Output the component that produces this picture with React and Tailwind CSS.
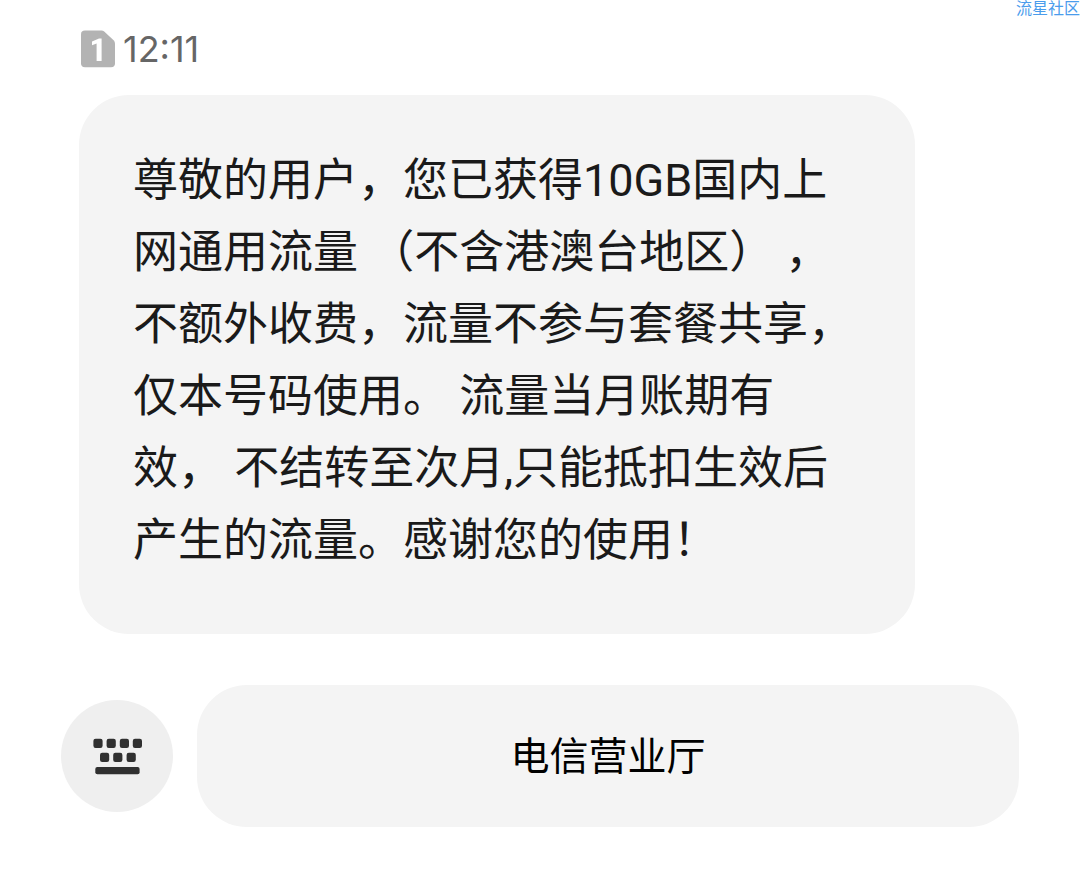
function SimIcon() {
  return (
    <svg width="34" height="38" viewBox="0 0 34 38" role="img" aria-label="SIM 1">
      <path
        d="M4 0.5H20.5Q22 0.5 23.2 1.5L32.6 10.2Q34 11.5 34 13.5V33.5Q34 37.2 30 37.2H4Q0 37.2 0 33.5V4.2Q0 0.5 4 0.5Z"
        fill="#b3b3b3"
      />
      <path d="M11 11.4L18 8.4H20.6V31H15.6V13.6L11 15.2Z" fill="#fff" />
    </svg>
  );
}

function KeyboardIcon() {
  return (
    <svg width="50" height="38" viewBox="0 0 50 38" fill="#303030" aria-hidden="true">
      <rect x="1.4" y="1.8" width="9.2" height="9.2" rx="2.2" />
      <rect x="14.6" y="1.8" width="9.2" height="9.2" rx="2.2" />
      <rect x="27.8" y="1.8" width="9.2" height="9.2" rx="2.2" />
      <rect x="40.8" y="1.8" width="9.2" height="9.2" rx="2.2" />
      <rect x="8" y="15.8" width="9.2" height="9.2" rx="2.2" />
      <rect x="21.2" y="15.8" width="9.2" height="9.2" rx="2.2" />
      <rect x="34.6" y="15.8" width="9.2" height="9.2" rx="2.2" />
      <rect x="3.3" y="30" width="44.3" height="7.2" rx="2" />
    </svg>
  );
}

export default function App() {
  return (
    <div className="relative min-h-screen bg-white px-[61px] pt-[30px] pb-[50px] font-['Roboto','Noto_Sans_CJK_SC',sans-serif]">
      <span className="absolute top-0 right-0 text-[16px] leading-[18px] whitespace-nowrap text-[#4a9cec]">
        流星社区
      </span>

      <main className="ml-[18px]">
        <div className="mb-[27px] ml-[2px] flex h-[38px] items-center gap-2">
          <SimIcon />
          <time className="font-['Inter','Noto_Sans_CJK_SC',sans-serif] text-[36px] leading-[38px] text-[#666]">
            12:11
          </time>
        </div>
        <p className="max-w-[836px] rounded-[50px] bg-[#f4f4f4] px-[54px] pt-[50px] pb-[57px] text-[45px] leading-[72px] text-[#1a1a1a]">
          尊敬的用户，您已获得10GB国内上网通用流量 （不含港澳台地区） ，不额外收费，流量不参与套餐共享，仅本号码使用。 流量当月账期有效， 不结转至次月,只能抵扣生效后产生的流量。感谢您的使用！
        </p>
      </main>

      <footer className="mt-[51px] flex items-center gap-6">
        <button
          type="button"
          aria-label="键盘"
          className="flex size-[112px] shrink-0 items-center justify-center rounded-full bg-[#efefef]"
        >
          <KeyboardIcon />
        </button>
        <button
          type="button"
          className="h-[142px] flex-1 rounded-[50px] bg-[#f4f4f4] pt-[2px] text-[39px] leading-[48px] text-black"
        >
          电信营业厅
        </button>
      </footer>
    </div>
  );
}
